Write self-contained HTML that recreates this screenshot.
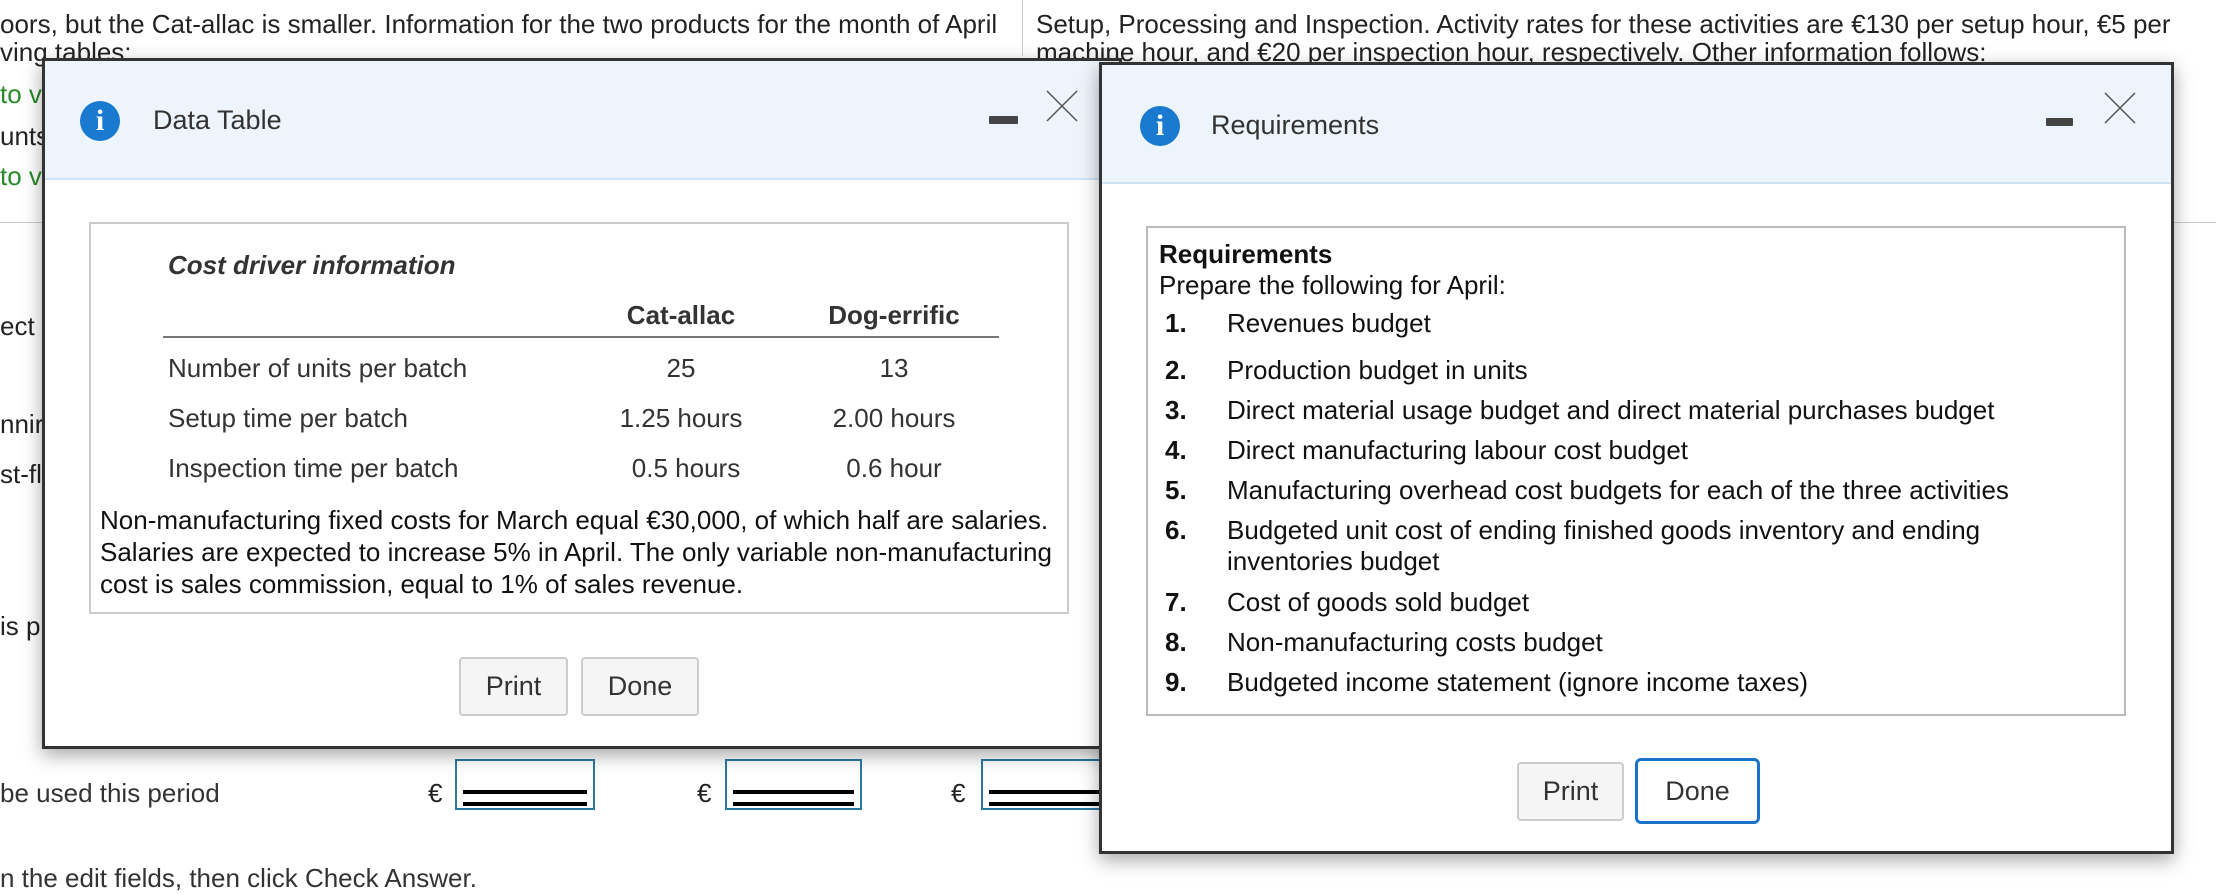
<!DOCTYPE html>
<html><head><meta charset="utf-8"><style>
*{margin:0;padding:0;box-sizing:border-box}
body{width:2216px;height:884px;overflow:hidden;background:#fff;font-family:"Liberation Sans",Arial,sans-serif;color:#222;position:relative}
.a{position:absolute;white-space:nowrap}
.g{color:#2a8a2a}
.dlg{position:absolute;background:#fff;border:3px solid #333;box-shadow:0 6px 18px rgba(0,0,0,.35)}
.hd{position:absolute;left:0;right:0;top:0;background:#eef4fc;border-bottom:2px solid #cfe3f5}
.ic{position:absolute;width:40px;height:40px;border-radius:50%;background:#1a7ad0;color:#fff;font:bold 30px "Liberation Serif",serif;text-align:center;line-height:40px}
.btn{position:absolute;border:2px solid #ccc;border-radius:4px;background:#f5f5f5;font-size:27px;color:#333;text-align:center}
.inp{position:absolute;border:2px solid #2a7aa0;height:51px}
.inp:after{content:"";position:absolute;left:6px;right:6px;top:29px;height:8px;border-top:4px solid #000;border-bottom:4px solid #000}
</style></head><body>
<div class="a" style="left:0;top:9px;font-size:26px">oors, but the Cat-allac is smaller. Information for the two products for the month of April</div>
<div class="a" style="left:0;top:37px;font-size:26px">ving tables:</div>
<div class="a" style="left:1022px;top:0;width:1px;height:56px;background:#ccc"></div>
<div class="a" style="left:1036px;top:9px;font-size:26px">Setup, Processing and Inspection. Activity rates for these activities are €130 per setup hour, €5 per</div>
<div class="a" style="left:1036px;top:37px;font-size:26px">machine hour, and €20 per inspection hour, respectively. Other information follows:</div>
<div class="a g" style="left:0;top:79px;font-size:26px">to vi</div>
<div class="a" style="left:0;top:121px;font-size:26px">unts</div>
<div class="a g" style="left:0;top:161px;font-size:26px">to vi</div>
<div class="a" style="left:0;top:222px;width:2216px;height:1px;background:#ccc"></div>
<div class="a" style="left:0;top:311px;font-size:26px">ect</div>
<div class="a" style="left:0;top:409px;font-size:26px">nnir</div>
<div class="a" style="left:0;top:459px;font-size:26px">st-fl</div>
<div class="a" style="left:0;top:611px;font-size:26px">is p</div>
<div class="a" style="left:0;top:778px;font-size:26px;color:#333">be used this period</div>
<div class="a" style="left:428px;top:778px;font-size:26px">€</div>
<div class="inp" style="left:455px;top:759px;width:140px"></div>
<div class="a" style="left:697px;top:778px;font-size:26px">€</div>
<div class="inp" style="left:725px;top:759px;width:137px"></div>
<div class="a" style="left:951px;top:778px;font-size:26px">€</div>
<div class="inp" style="left:981px;top:759px;width:140px"></div>
<div class="a" style="left:0;top:863px;font-size:26px;color:#333">n the edit fields, then click Check Answer.</div>

<div class="dlg" style="left:42px;top:58px;width:1080px;height:691px">
 <div class="hd" style="height:119px"></div>
 <div class="ic" style="left:35px;top:40px">i</div>
 <div class="a" style="left:108px;top:44px;font-size:27px;color:#333">Data Table</div>
 <div class="a" style="left:944px;top:55px;width:29px;height:8px;background:#444;border-radius:1px"></div>
 <svg class="a" style="left:1000px;top:28px" width="34" height="34"><path d="M2 2L32 32M32 2L2 32" stroke="#555" stroke-width="1.5"/></svg>
 <div class="a" style="left:44px;top:161px;width:980px;height:392px;border:2px solid #ccc"></div>
 <div class="a" style="left:123px;top:189px;font-size:26px;font-weight:bold;font-style:italic;color:#333">Cost driver information</div>
 <div class="a" style="left:566px;top:239px;font-size:26px;font-weight:bold;color:#333;width:140px;text-align:center">Cat-allac</div>
 <div class="a" style="left:774px;top:239px;font-size:26px;font-weight:bold;color:#333;width:150px;text-align:center">Dog-errific</div>
 <div class="a" style="left:118px;top:275px;width:836px;height:2px;background:#777"></div>
 <div class="a" style="left:123px;top:292px;font-size:26px;color:#333">Number of units per batch</div>
 <div class="a" style="left:581px;top:292px;font-size:26px;color:#333;width:110px;text-align:center">25</div>
 <div class="a" style="left:784px;top:292px;font-size:26px;color:#333;width:130px;text-align:center">13</div>
 <div class="a" style="left:123px;top:342px;font-size:26px;color:#333">Setup time per batch</div>
 <div class="a" style="left:556px;top:342px;font-size:26px;color:#333;width:160px;text-align:center">1.25 hours</div>
 <div class="a" style="left:769px;top:342px;font-size:26px;color:#333;width:160px;text-align:center">2.00 hours</div>
 <div class="a" style="left:123px;top:392px;font-size:26px;color:#333">Inspection time per batch</div>
 <div class="a" style="left:561px;top:392px;font-size:26px;color:#333;width:160px;text-align:center">0.5 hours</div>
 <div class="a" style="left:769px;top:392px;font-size:26px;color:#333;width:160px;text-align:center">0.6 hour</div>
 <div class="a" style="left:55px;top:443px;font-size:26px;line-height:32px;color:#111">Non-manufacturing fixed costs for March equal €30,000, of which half are salaries.<br>Salaries are expected to increase 5% in April. The only variable non-manufacturing<br>cost is sales commission, equal to 1% of sales revenue.</div>
 <div class="btn" style="left:414px;top:596px;width:109px;height:59px;line-height:55px">Print</div>
 <div class="btn" style="left:536px;top:596px;width:118px;height:59px;line-height:55px">Done</div>
</div>

<div class="dlg" style="left:1099px;top:62px;width:1075px;height:792px">
 <div class="hd" style="height:119px"></div>
 <div class="ic" style="left:38px;top:41px">i</div>
 <div class="a" style="left:109px;top:45px;font-size:27px;color:#333">Requirements</div>
 <div class="a" style="left:944px;top:53px;width:27px;height:8px;background:#444;border-radius:1px"></div>
 <svg class="a" style="left:1001px;top:26px" width="34" height="34"><path d="M2 2L32 32M32 2L2 32" stroke="#555" stroke-width="1.5"/></svg>
 <div class="a" style="left:44px;top:161px;width:980px;height:490px;border:2px solid #bbb"></div>
 <div style="position:absolute;left:57px;top:174px;font-size:26px;color:#111;line-height:31px">
  <div style="font-weight:bold">Requirements</div>
  <div>Prepare the following for April:</div>
 </div>
 <div style="position:absolute;left:63px;top:243px;font-size:26px;color:#111">
  <div class="a" style="top:0"><b>1.</b></div><div class="a" style="left:62px;top:0">Revenues budget</div>
  <div class="a" style="top:47px"><b>2.</b></div><div class="a" style="left:62px;top:47px">Production budget in units</div>
  <div class="a" style="top:87px"><b>3.</b></div><div class="a" style="left:62px;top:87px">Direct material usage budget and direct material purchases budget</div>
  <div class="a" style="top:127px"><b>4.</b></div><div class="a" style="left:62px;top:127px">Direct manufacturing labour cost budget</div>
  <div class="a" style="top:167px"><b>5.</b></div><div class="a" style="left:62px;top:167px">Manufacturing overhead cost budgets for each of the three activities</div>
  <div class="a" style="top:207px"><b>6.</b></div><div class="a" style="left:62px;top:207px;line-height:31px">Budgeted unit cost of ending finished goods inventory and ending<br>inventories budget</div>
  <div class="a" style="top:279px"><b>7.</b></div><div class="a" style="left:62px;top:279px">Cost of goods sold budget</div>
  <div class="a" style="top:319px"><b>8.</b></div><div class="a" style="left:62px;top:319px">Non-manufacturing costs budget</div>
  <div class="a" style="top:359px"><b>9.</b></div><div class="a" style="left:62px;top:359px">Budgeted income statement (ignore income taxes)</div>
 </div>
 <div class="btn" style="left:415px;top:697px;width:107px;height:59px;line-height:55px">Print</div>
 <div class="btn" style="left:533px;top:693px;width:125px;height:66px;line-height:60px;border:3px solid #1a73c8;background:#fff;border-radius:6px">Done</div>
</div>
</body></html>
